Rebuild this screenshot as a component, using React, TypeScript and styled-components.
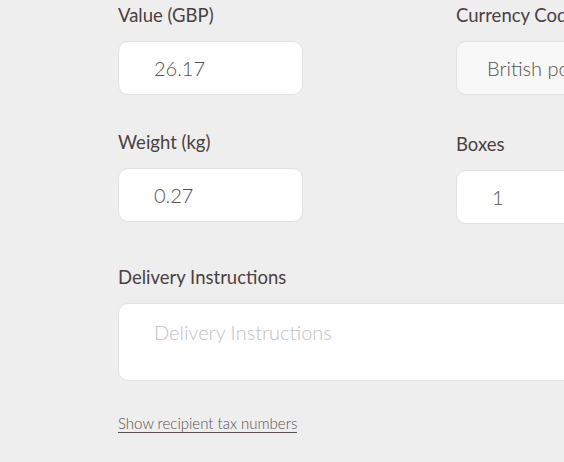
import React from "react";
import styled, { createGlobalStyle } from "styled-components";

const GlobalStyle = createGlobalStyle`
    html, body {
        margin: 0;
        padding: 0;
        background: #eeeeee;
        font-family: "Lato", "Open Sans", sans-serif;
        overflow: hidden;
    }
`;

const Page = styled.div`
    width: 700px;
    padding: 4px 0 0 118px;
    color: #4b4042;
`;

const Grid = styled.div`
    display: grid;
    grid-template-columns: 338px 185px;
    row-gap: 36px;
`;

const Field = styled.div<{ $shift?: number }>`
    display: flex;
    flex-direction: column;
    margin-top: ${(p) => p.$shift ?? 0}px;
`;

const Label = styled.label`
    font-size: 18.5px;
    line-height: 22px;
    height: 22px;
    margin-bottom: 15px;
    color: #4b4042;
    white-space: nowrap;
`;

const Input = styled.input<{ $grey?: boolean }>`
    box-sizing: border-box;
    width: 185px;
    height: 54px;
    padding: 0 0 0 ${(p) => (p.$grey ? 30 : 35)}px;
    border: 1px solid #e1e1e1;
    border-radius: 10px;
    background: ${(p) => (p.$grey ? "#f8f8f8" : "#ffffff")};
    font-family: inherit;
    font-size: 20px;
    font-weight: 300;
    color: #5a4f51;
    outline: none;
`;

const Wide = styled(Field)`
    margin-top: 42px;
`;

const TextArea = styled.textarea`
    box-sizing: border-box;
    width: 523px;
    height: 78px;
    padding: 16px 35px;
    border: 1px solid #e1e1e1;
    border-radius: 10px;
    background: #ffffff;
    font-family: inherit;
    font-size: 20px;
    font-weight: 300;
    color: #5a4f51;
    resize: none;
    outline: none;
    &::placeholder {
        color: #c4c0c0;
    }
`;

const LinkRow = styled.div`
    margin-top: 33px;
    line-height: 17px;
`;

const TaxLink = styled.a`
    display: inline-block;
    font-size: 15px;
    line-height: 17px;
    font-weight: 300;
    color: #5a4f51;
    text-decoration: none;
    border-bottom: 1px solid #5a4f51;
    cursor: pointer;
`;

const App: React.FC = () => {
    return (
        <>
            <GlobalStyle />
            <Page>
                <Grid>
                    <Field>
                        <Label>Value (GBP)</Label>
                        <Input defaultValue="26.17" />
                    </Field>
                    <Field>
                        <Label>Currency Code</Label>
                        <Input $grey defaultValue="British pound" />
                    </Field>
                    <Field>
                        <Label>Weight (kg)</Label>
                        <Input defaultValue="0.27" />
                    </Field>
                    <Field $shift={2}>
                        <Label>Boxes</Label>
                        <Input defaultValue="1" />
                    </Field>
                </Grid>
                <Wide>
                    <Label>Delivery Instructions</Label>
                    <TextArea placeholder="Delivery Instructions" />
                </Wide>
                <LinkRow>
                    <TaxLink href="#">Show recipient tax numbers</TaxLink>
                </LinkRow>
            </Page>
        </>
    );
};

export default App;
